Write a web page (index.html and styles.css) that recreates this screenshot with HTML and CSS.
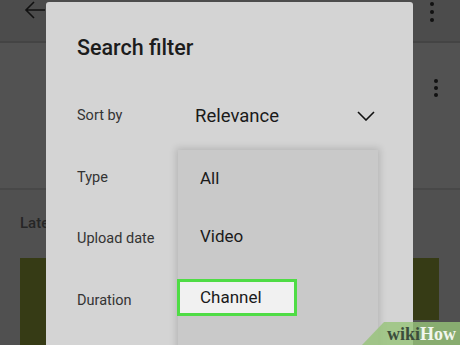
FILE: index.html
```html
<!DOCTYPE html>
<html lang="en">
<head>
<meta charset="UTF-8">
<title>Search filter</title>
<link rel="stylesheet" href="styles.css">
</head>
<body>
<div class="screen">
  <div class="appbar">
    <svg class="back" width="22" height="20" viewBox="0 0 22 20"><path d="M21 10H2M10 2L2 10L10 18" fill="none" stroke="#111" stroke-width="1.6"/></svg>
    <div class="dots"><span></span><span></span><span></span></div>
  </div>
  <div class="results">
    <div class="dots small"><span></span><span></span><span></span></div>
  </div>
  <div class="latest">
    <div class="latest-title">Latest</div>
    <div class="thumbs">
      <div class="thumb"></div>
      <div class="thumb right"></div>
    </div>
  </div>

  <div class="dialog">
    <h1>Search filter</h1>
    <div class="row">
      <span class="label">Sort by</span>
      <span class="value">Relevance</span>
      <svg class="chev" width="18" height="10" viewBox="0 0 18 10"><path d="M1 1L9 9L17 1" fill="none" stroke="#111" stroke-width="1.6"/></svg>
    </div>
    <div class="row"><span class="label">Type</span></div>
    <div class="row"><span class="label">Upload date</span></div>
    <div class="row"><span class="label">Duration</span></div>

    <div class="menu">
      <div class="item">All</div>
      <div class="item">Video</div>
      <div class="item"><span class="picked">Channel</span></div>
      <div class="item"></div>
    </div>
  </div>

  <div class="brand"><span class="wiki">wiki</span><span class="how">How</span></div>
</div>
</body>
</html>
```

FILE: styles.css
```css
body {
  margin: 0;
  font-family: Roboto, "Liberation Sans", sans-serif;
  background: #505050;
}
.screen {
  position: relative;
  width: 460px;
  height: 345px;
  overflow: hidden;
  background: #505050;
}
.appbar {
  height: 41px;
  background: #4c4c4c;
  border-bottom: 2px solid #444;
  position: relative;
}
.back {
  position: absolute;
  left: 24px;
  top: 0;
}
.dots {
  position: absolute;
  right: 26px;
  top: 2px;
  display: flex;
  flex-direction: column;
  gap: 4px;
}
.dots span {
  width: 4px;
  height: 4px;
  border-radius: 50%;
  background: #111;
}
.results {
  height: 145px;
  background: #525252;
  border-bottom: 2px solid #484848;
  position: relative;
}
.dots.small {
  right: 22px;
  top: 36px;
  gap: 3px;
}
.latest {
  padding: 24px 0 0 20px;
}
.latest-title {
  font-size: 15px;
  font-weight: 500;
  color: #262626;
}
.thumbs {
  display: flex;
  margin-top: 26px;
}
.thumb {
  width: 26px;
  height: 90px;
  background: #363b15;
}
.thumb.right {
  margin-left: 367px;
  height: 62px;
}
.dialog {
  position: absolute;
  left: 46px;
  top: 2px;
  width: 367px;
  height: 360px;
  background: #d4d4d4;
  border-radius: 3px;
  padding-left: 31px;
  box-sizing: border-box;
}
.dialog h1 {
  margin: 0;
  padding-top: 33px;
  height: 50px;
  font-size: 21.5px;
  font-weight: 500;
  color: #1c1c1c;
}
.row {
  display: flex;
  align-items: center;
  height: 61.5px;
}
.label {
  width: 118px;
  font-size: 14.5px;
  color: #333;
}
.value {
  flex: 1;
  font-size: 18.5px;
  color: #1a1a1a;
}
.chev {
  margin-right: 38px;
}
.menu {
  position: absolute;
  left: 132px;
  top: 148px;
  width: 200px;
  height: 220px;
  background: #c9c9c9;
  box-shadow: 0 0 7px 2px rgba(0, 0, 0, 0.14);
}
.item {
  height: 61.5px;
  display: flex;
  align-items: center;
  padding-left: 22px;
  font-size: 17px;
  color: #1a1a1a;
}
.item:first-child {
  height: 55px;
}
.picked {
  margin-left: -23px;
  width: 94px;
  height: 31px;
  line-height: 31px;
  padding-left: 20px;
  background: #f1f1f1;
  border: 3px solid #4fdc45;
}
.brand {
  position: absolute;
  right: 0;
  bottom: 0;
  width: 98px;
  height: 23px;
  background: rgba(150, 195, 120, 0.8);
  clip-path: polygon(22px 0, 100% 0, 100% 100%, 0 100%);
  font-family: "Liberation Serif", serif;
  font-weight: bold;
  font-size: 18px;
  line-height: 24px;
  padding-left: 25px;
  box-sizing: border-box;
}
.wiki {
  color: #3b4d3b;
}
.how {
  color: #f2f6ee;
}
```
